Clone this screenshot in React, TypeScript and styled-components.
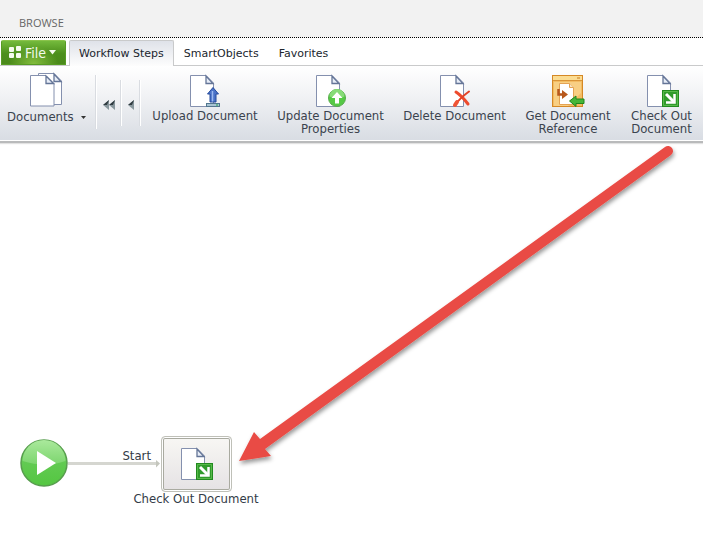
import React from "react";
import styled, { createGlobalStyle } from "styled-components";

const GlobalStyle = createGlobalStyle`
  * { box-sizing: border-box; }
  html, body { margin: 0; padding: 0; background: #fff; }
  body { font-family: "DejaVu Sans", Verdana, sans-serif; color: #333b47; }
  button { font: inherit; color: inherit; background: none; border: 0; padding: 0; margin: 0; cursor: pointer; }
  svg { display: block; flex: none; }
`;

const Page = styled.div`
  min-height: 100vh;
  display: flex;
  flex-direction: column;
  overflow: hidden;
`;

const Header = styled.header`
  display: flex;
  height: 38px;
  padding: 15px 19px 0;
  background: #f2f2f2;
  border-bottom: 1px dotted #000;
`;

const BrowseLink = styled.a`
  font: 11px/16px "Open Sans", "Noto Sans", sans-serif;
  color: #666;
  text-decoration: none;
`;

const TabBar = styled.nav`
  display: flex;
  align-items: flex-end;
  height: 28px;
  padding-left: 1px;
  background: #fff;
  box-shadow: inset 0 -1px 0 #c9cacb;
`;

const FileButton = styled.button`
  display: flex;
  align-items: center;
  align-self: flex-start;
  gap: 3px;
  width: 65px;
  height: 25px;
  margin: 2px 3px 0 0;
  padding: 0 6px;
  border: 1px solid #579b24;
  border-top-color: #8ac34b;
  border-radius: 2px 2px 0 0;
  background: radial-gradient(ellipse at 50% 100%, #83bd3e 0, transparent 55%),
    linear-gradient(#74ba3c, #4c8f1c 55%, #4b8a1b);
  color: #f4faed;
  font: 14px/20px "DejaVu Sans Condensed", "Noto Sans", sans-serif;
`;

const Tab = styled.button<{ $active?: boolean }>`
  height: ${(p) => (p.$active ? 26 : 25)}px;
  padding: 0 ${(p) => (p.$active ? 9 : 10)}px;
  font-size: 11px;
  line-height: 24px;
  color: #20262e;
  white-space: nowrap;
  border: ${(p) => (p.$active ? "1px solid #c9cacb" : "0")};
  border-bottom: 0;
  border-radius: 2px 2px 0 0;
  background: ${(p) => (p.$active ? "linear-gradient(#dfe2e9, #fdfdfd)" : "none")};
`;

const Ribbon = styled.div`
  display: flex;
  align-items: flex-start;
  height: 77px;
  padding-top: 8px;
  background: linear-gradient(#fff, #f3f4f6 35%, #d8dce3);
  border-bottom: 2px solid #b9babb;
  box-shadow: inset 0 -1px 0 #fff, 0 1px 1px #e2e2e2;
`;

const DocumentsButton = styled.button`
  display: grid;
  grid-template-columns: auto auto;
  align-items: center;
  justify-content: space-between;
  width: 79px;
  margin: -2px 9px 0 7px;
  font: 13px/16px "DejaVu Sans Condensed", "Noto Sans", sans-serif;
  color: #3b434e;
  svg:first-child { grid-column: 1 / -1; margin-left: 22px; }
`;

const Divider = styled.span<{ $short?: boolean }>`
  width: 2px;
  height: ${(p) => (p.$short ? 46 : 54)}px;
  margin-top: ${(p) => (p.$short ? 6 : 1)}px;
  background: linear-gradient(90deg, #d9dce1 50%, #fff 50%);
`;

const ScrollButton = styled.button<{ $wide?: boolean }>`
  display: flex;
  align-items: center;
  justify-content: center;
  width: ${(p) => (p.$wide ? 23 : 17)}px;
  height: 62px;
`;

const Actions = styled.div`
  display: flex;
  gap: 21px;
  margin-left: 12px;
`;

const ActionButton = styled.button<{ $width: number }>`
  display: flex;
  flex-direction: column;
  align-items: center;
  flex: none;
  gap: 1px;
  width: ${(p) => p.$width}px;
  font: 13px/13px "DejaVu Sans Condensed", "Noto Sans", sans-serif;
  color: #3b434e;
  span { white-space: pre; text-align: center; }
`;

const Canvas = styled.main`
  position: relative;
  flex: 1;
  min-height: 400px;
`;

const StartNode = styled.button`
  position: absolute;
  left: 20px;
  top: 295px;
`;

const Connector = styled.div`
  position: absolute;
  left: 68px;
  top: 304px;
  width: 92px;
  font: 13px/17px "DejaVu Sans Condensed", "Noto Sans", sans-serif;
  text-align: right;
  span { padding-right: 9px; }
  svg { margin-top: -4px; }
`;

const StepNode = styled.div`
  position: absolute;
  left: 126px;
  top: 293px;
  width: 140px;
  display: flex;
  flex-direction: column;
  align-items: center;
`;

const StepBox = styled.button`
  display: flex;
  align-items: center;
  justify-content: center;
  width: 71px;
  height: 56px;
  border: 1px solid #bfc0b8;
  border-radius: 4px;
  background: linear-gradient(#f8f7f4, #e5e2e4);
  box-shadow: inset 0 0 0 1px #fff, inset 0 0 0 2px #a9aaa0;
`;

const StepLabel = styled.span`
  font: 13px/13px "DejaVu Sans Condensed", "Noto Sans", sans-serif;
  white-space: nowrap;
`;

const PointerArrow = styled.svg`
  position: absolute;
  left: 230px;
  top: 0;
  pointer-events: none;
`;

const Sheet = () => (
  <>
    <path d="M2.5 1.5H18L25.5 9v23.5h-23z" fill="#fff" stroke="#8490ae" />
    <path d="M18 2v7.5h7z" fill="#e7edf7" stroke="#647597" strokeWidth="1.3" />
  </>
);

type IconKind = "upload" | "update" | "delete" | "reference" | "checkout";

const ActionIcon = ({ kind }: { kind: IconKind }) => (
  <svg width="34" height="34" viewBox="0 0 34 34" aria-hidden="true">
    {kind !== "reference" && <Sheet />}
    {kind === "upload" && (
      <>
        <path d="M25 13.5l5.500 6.500H28v8h-6v-8h-2.500z" fill="#4a72c7" stroke="#254b9c" />
        <path d="M24.500 17v10.500" stroke="#9cb9ef" strokeWidth="1.5" />
        <rect x="18.5" y="29.5" width="13" height="3" fill="#a9c4d4" stroke="#52768f" />
        <path d="M28 31h2" stroke="#22a64c" />
      </>
    )}
    {kind === "update" && (
      <>
        <circle cx="23" cy="24" r="8.5" fill="#55c945" stroke="#58ab4d" />
        <path d="M15.5 22.500a7.5 7.5 0 0 1 15 0q-7 3-15 0" fill="#87dc78" />
        <path d="M23 18l5.5 6H25v5.5h-4V24h-3.5z" fill="#fff" />
      </>
    )}
    {kind === "delete" && (
      <>
        <path d="M18 18Q24 22 30 30" stroke="#ed4b2d" strokeWidth="3" strokeLinecap="round" fill="none" />
        <path d="M31 17.500Q22 24 17 31" stroke="#e34328" strokeWidth="2" strokeLinecap="round" fill="none" />
        <path d="M17 31l2-3" stroke="#ef5435" strokeWidth="4" strokeLinecap="round" />
      </>
    )}
    {kind === "reference" && (
      <>
        <rect x="1.5" y="1.5" width="30" height="31" fill="#f3bc62" stroke="#d58825" />
        <rect x="2" y="2" width="29" height="4" fill="#fbdc91" />
        <path d="M2 6.5h29" stroke="#d99437" />
        <path d="M26 4h3" stroke="#c7781c" />
        <path d="M3 8h27v11L17 32H3z" fill="#fad792" opacity=".7" />
        <path d="M8.500 9.500h10l4 4v17h-14z" fill="#fff" stroke="#e4a354" />
        <path d="M18.500 9.500v4h4" fill="#f9e5bf" stroke="#e4a354" />
        <path d="M7.500 15v5.500h5" fill="none" stroke="#b8581c" strokeWidth="2.500" />
        <path d="M11 16l6 4.500-6 4.500z" fill="#b8581c" />
        <path d="M18.500 27l6.500-5v3h8v4.500h-8v3z" fill="#46b638" stroke="#21861d" />
      </>
    )}
    {kind === "checkout" && (
      <>
        <rect x="17.500" y="16.500" width="16" height="16" fill="#309b2c" stroke="#218a1f" />
        <path d="M18.500 17.500h14v14h-14z" fill="none" stroke="#58b94a" />
        <path d="M21 20l8 8" stroke="#fff" strokeWidth="3" />
        <path d="M29.500 20v8.500H21" fill="none" stroke="#fff" strokeWidth="2.500" />
      </>
    )}
  </svg>
);

const actions: { label: string; kind: IconKind; width: number }[] = [
  { label: "Upload Document", kind: "upload", width: 104 },
  { label: "Update Document\nProperties", kind: "update", width: 105 },
  { label: "Delete Document", kind: "delete", width: 101 },
  { label: "Get Document\nReference", kind: "reference", width: 84 },
  { label: "Check Out\nDocument", kind: "checkout", width: 61 },
];

export default function App() {
  return (
    <Page>
      <GlobalStyle />
      <Header>
        <BrowseLink href="#browse">BROWSE</BrowseLink>
      </Header>
      <TabBar>
        <FileButton>
          <svg width="14" height="13" viewBox="0 0 14 13" fill="#f6fbef" aria-hidden="true">
            <rect x="1" y="1" width="5" height="5" rx="1" />
            <rect x="8" y="0" width="5" height="5" rx="1" />
            <rect x="1" y="7" width="5" height="5" rx="1" />
            <rect x="8" y="7" width="5" height="5" rx="1" />
          </svg>
          File
          <svg width="7" height="5" viewBox="0 0 7 5" aria-hidden="true">
            <path d="M0 0h7L3.500 4.500z" fill="#f6fbef" />
          </svg>
        </FileButton>
        <Tab $active>Workflow Steps</Tab>
        <Tab>SmartObjects</Tab>
        <Tab>Favorites</Tab>
      </TabBar>
      <Ribbon>
        <DocumentsButton>
          <svg width="36" height="37" viewBox="0 0 36 37" aria-hidden="true">
            <path d="M9.500 1.500H25L32.500 9v23.500h-23z" fill="#fff" stroke="#8490ae" />
            <path d="M25 2v7.500h7z" fill="#e7edf7" stroke="#647597" strokeWidth="1.300" />
            <path d="M1.500 3.500H17l8 8v22.500h-23.500z" fill="#fff" stroke="#8490ae" />
            <path d="M17 4v7.500h7.500z" fill="#e7edf7" stroke="#647597" strokeWidth="1.300" />
          </svg>
          <span>Documents</span>
          <svg width="5" height="3" viewBox="0 0 5 3" aria-hidden="true">
            <path d="M0 0h5L2.500 3z" fill="#333" />
          </svg>
        </DocumentsButton>
        <Divider />
        <ScrollButton $wide aria-label="First steps">
          <svg width="12" height="10" viewBox="0 0 12 10" aria-hidden="true">
            <path d="M6 0v10L0 5zM12 0v10L6 5z" fill="#87969c" />
            <path d="M6 0L0 5h4zM12 0L6 5h4z" fill="#303b40" />
          </svg>
        </ScrollButton>
        <Divider $short />
        <ScrollButton aria-label="Previous steps">
          <svg width="6" height="10" viewBox="0 0 6 10" aria-hidden="true">
            <path d="M6 0v10L0 5z" fill="#87969c" />
            <path d="M6 0L0 5h4z" fill="#303b40" />
          </svg>
        </ScrollButton>
        <Divider $short />
        <Actions>
          {actions.map((a) => (
            <ActionButton key={a.kind} $width={a.width}>
              <ActionIcon kind={a.kind} />
              <span>{a.label}</span>
            </ActionButton>
          ))}
        </Actions>
      </Ribbon>
      <Canvas>
        <StartNode aria-label="Start workflow">
          <svg width="48" height="50" viewBox="0 0 48 50" aria-hidden="true">
            <defs>
              <linearGradient id="startFill" x2="0" y2="1">
                <stop stopColor="#6fce62" />
                <stop offset="1" stopColor="#54c641" />
              </linearGradient>
              <linearGradient id="startShine" x2="0" y2="1">
                <stop stopColor="#aae99c" />
                <stop offset="1" stopColor="#7cd56e" />
              </linearGradient>
            </defs>
            <circle cx="24" cy="25" r="23" fill="url(#startFill)" stroke="#579d4d" strokeWidth="1.500" />
            <path d="M2.500 23a21.500 21 0 0 1 43 0q-20 7-43 0" fill="url(#startShine)" />
            <path d="M17 13v24l19-12z" fill="#fff" />
          </svg>
        </StartNode>
        <Connector>
          <span>Start</span>
          <svg width="92" height="8" viewBox="0 0 92 8" aria-hidden="true">
            <path d="M0 3.500H88" stroke="#d5d6d0" strokeWidth="3" />
            <path d="M88 0l4 3.500-4 4z" fill="#c4c6bd" />
          </svg>
        </Connector>
        <StepNode>
          <StepBox aria-label="Check Out Document">
            <ActionIcon kind="checkout" />
          </StepBox>
          <StepLabel>Check Out Document</StepLabel>
        </StepNode>
        <PointerArrow width="460" height="340" viewBox="0 0 460 340" aria-hidden="true">
          <defs>
            <filter id="arrowShadow" x="-5%" y="-5%" width="112%" height="112%">
              <feDropShadow dx="1" dy="3" stdDeviation="2" floodColor="#000" floodOpacity=".4" />
            </filter>
          </defs>
          <path
            d="M9 318L24 289L30 296L435 4A5 5 0 0 1 441 12L35 306L41 313Z"
            fill="#e94b44"
            filter="url(#arrowShadow)"
          />
        </PointerArrow>
      </Canvas>
    </Page>
  );
}
